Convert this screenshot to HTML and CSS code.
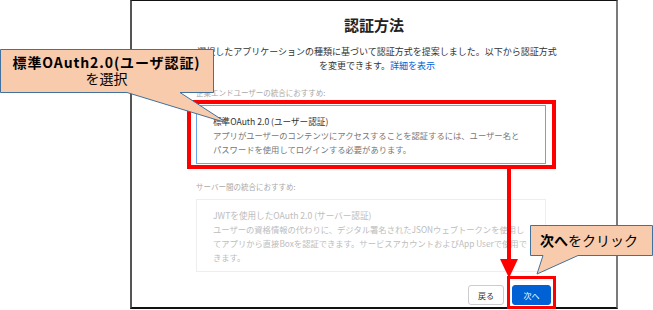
FILE: index.html
```html
<!DOCTYPE html>
<html lang="ja">
<head>
<meta charset="UTF-8">
<title>認証方法</title>
<link rel="stylesheet" href="styles.css">
</head>
<body>
<div class="page">
  <div class="dialog">
    <h1>認証方法</h1>
    <div class="body">
      <p class="intro">選択したアプリケーションの種類に基づいて認証方式を提案しました。以下から認証方式を変更できます。<a href="#">詳細を表示</a></p>

      <div class="group-label">企業エンドユーザーの統合におすすめ:</div>
      <div class="option selected">
        <div class="option-title">標準OAuth 2.0 (ユーザー認証)</div>
        <div class="option-desc">アプリがユーザーのコンテンツにアクセスすることを認証するには、ユーザー名とパスワードを使用してログインする必要があります。</div>
      </div>

      <div class="group-label second">サーバー間の統合におすすめ:</div>
      <div class="option disabled">
        <div class="option-title">JWTを使用したOAuth 2.0 (サーバー認証)</div>
        <div class="option-desc">ユーザーの資格情報の代わりに、デジタル署名されたJSONウェブトークンを使用し<br>てアプリから直接Boxを認証できます。サービスアカウントおよびApp Userで使用で<br>きます。</div>
      </div>

      <div class="actions">
        <button class="btn">戻る</button>
        <button class="btn primary">次へ</button>
      </div>
    </div>
  </div>

  <!-- annotations drawn over the screenshot -->
  <svg class="marks" width="653" height="310" viewBox="0 0 653 310">
    <rect x="189" y="102" width="365" height="65" fill="none" stroke="#ff0000" stroke-width="4"/>
    <rect x="507" y="167" width="4" height="94" fill="#ff0000"/>
    <polygon points="500,259 518,259 509,278" fill="#ff0000"/>
    <rect x="508.5" y="277.5" width="46" height="30" fill="none" stroke="#ff0000" stroke-width="3"/>
    <path d="M0.5,49.5 H213.5 V92.5 H180 L227,123 L127,92.5 H0.5 Z" fill="#f8cbad" stroke="#41719c" stroke-width="1"/>
    <path d="M530.5,225.5 H652.5 V255.5 H578 L537,274 L543,255.5 H530.5 Z" fill="#f8cbad" stroke="#41719c" stroke-width="1"/>
  </svg>
  <div class="note note-select">
    <b class="note-strong">標準OAuth2.0(ユーザ認証)</b>
    <span>を選択</span>
  </div>
  <div class="note note-next"><b>次へ</b>をクリック</div>
</div>
</body>
</html>
```

FILE: styles.css
```css
:root{
  --box-blue:#0061d5;
  --red:#ff0000;
}
body{margin:0;font-family:"Noto Sans CJK JP","Noto Sans",sans-serif;background:#fff;}
.page{position:relative;width:653px;height:310px;overflow:hidden;}

.dialog{box-sizing:border-box;margin-left:130px;width:488px;height:309px;border-left:2px solid #555;border-right:2px solid #7a7a7a;border-top:1px solid #111;border-bottom:2px solid #111;}
.dialog h1{margin:15px 0 0;font-size:15px;line-height:18px;font-weight:700;color:#222;text-align:center;}
.body{padding-left:64px;}
.intro{margin:11px 0 0;width:362px;font-size:9px;line-height:14px;color:#333;text-align:center;}
.intro a{color:var(--box-blue);text-decoration:none;}

.group-label{margin-top:14px;font-size:7.5px;line-height:11px;color:#a8a8a8;}
.group-label.second{margin-top:17px;}

.option{box-sizing:border-box;width:350px;margin-top:7px;padding:9px 20px 7px 16px;border:1px solid #eee;}
.option.selected{border-color:#6aa5e8;}
.option.disabled{padding-right:8px;}
.option-title{font-size:8.6px;line-height:13px;color:#333;}
.option-desc{font-size:8.3px;line-height:14px;color:#777;}
.option.disabled .option-title,.option.disabled .option-desc{color:#bdbdbd;}

.actions{display:flex;justify-content:flex-end;gap:8px;width:355px;margin-top:13px;}
.btn{box-sizing:border-box;height:20px;padding:0;border:1px solid #ccc;border-radius:3px;background:#fff;font-family:inherit;font-size:8px;color:#333;width:36px;}
.btn.primary{width:39px;border-color:var(--box-blue);background:var(--box-blue);color:#fff;}

.marks{position:absolute;left:0;top:0;}
.note{position:absolute;color:#000;text-align:center;font-size:14px;}
.note-select{left:0;top:49px;width:213px;height:43px;display:flex;flex-direction:column;justify-content:center;line-height:15.5px;}
.note-strong{letter-spacing:0.9px;}
.note-next{left:530px;top:225px;width:122px;height:30px;line-height:30px;text-align:left;padding-left:10px;box-sizing:border-box;}
```
